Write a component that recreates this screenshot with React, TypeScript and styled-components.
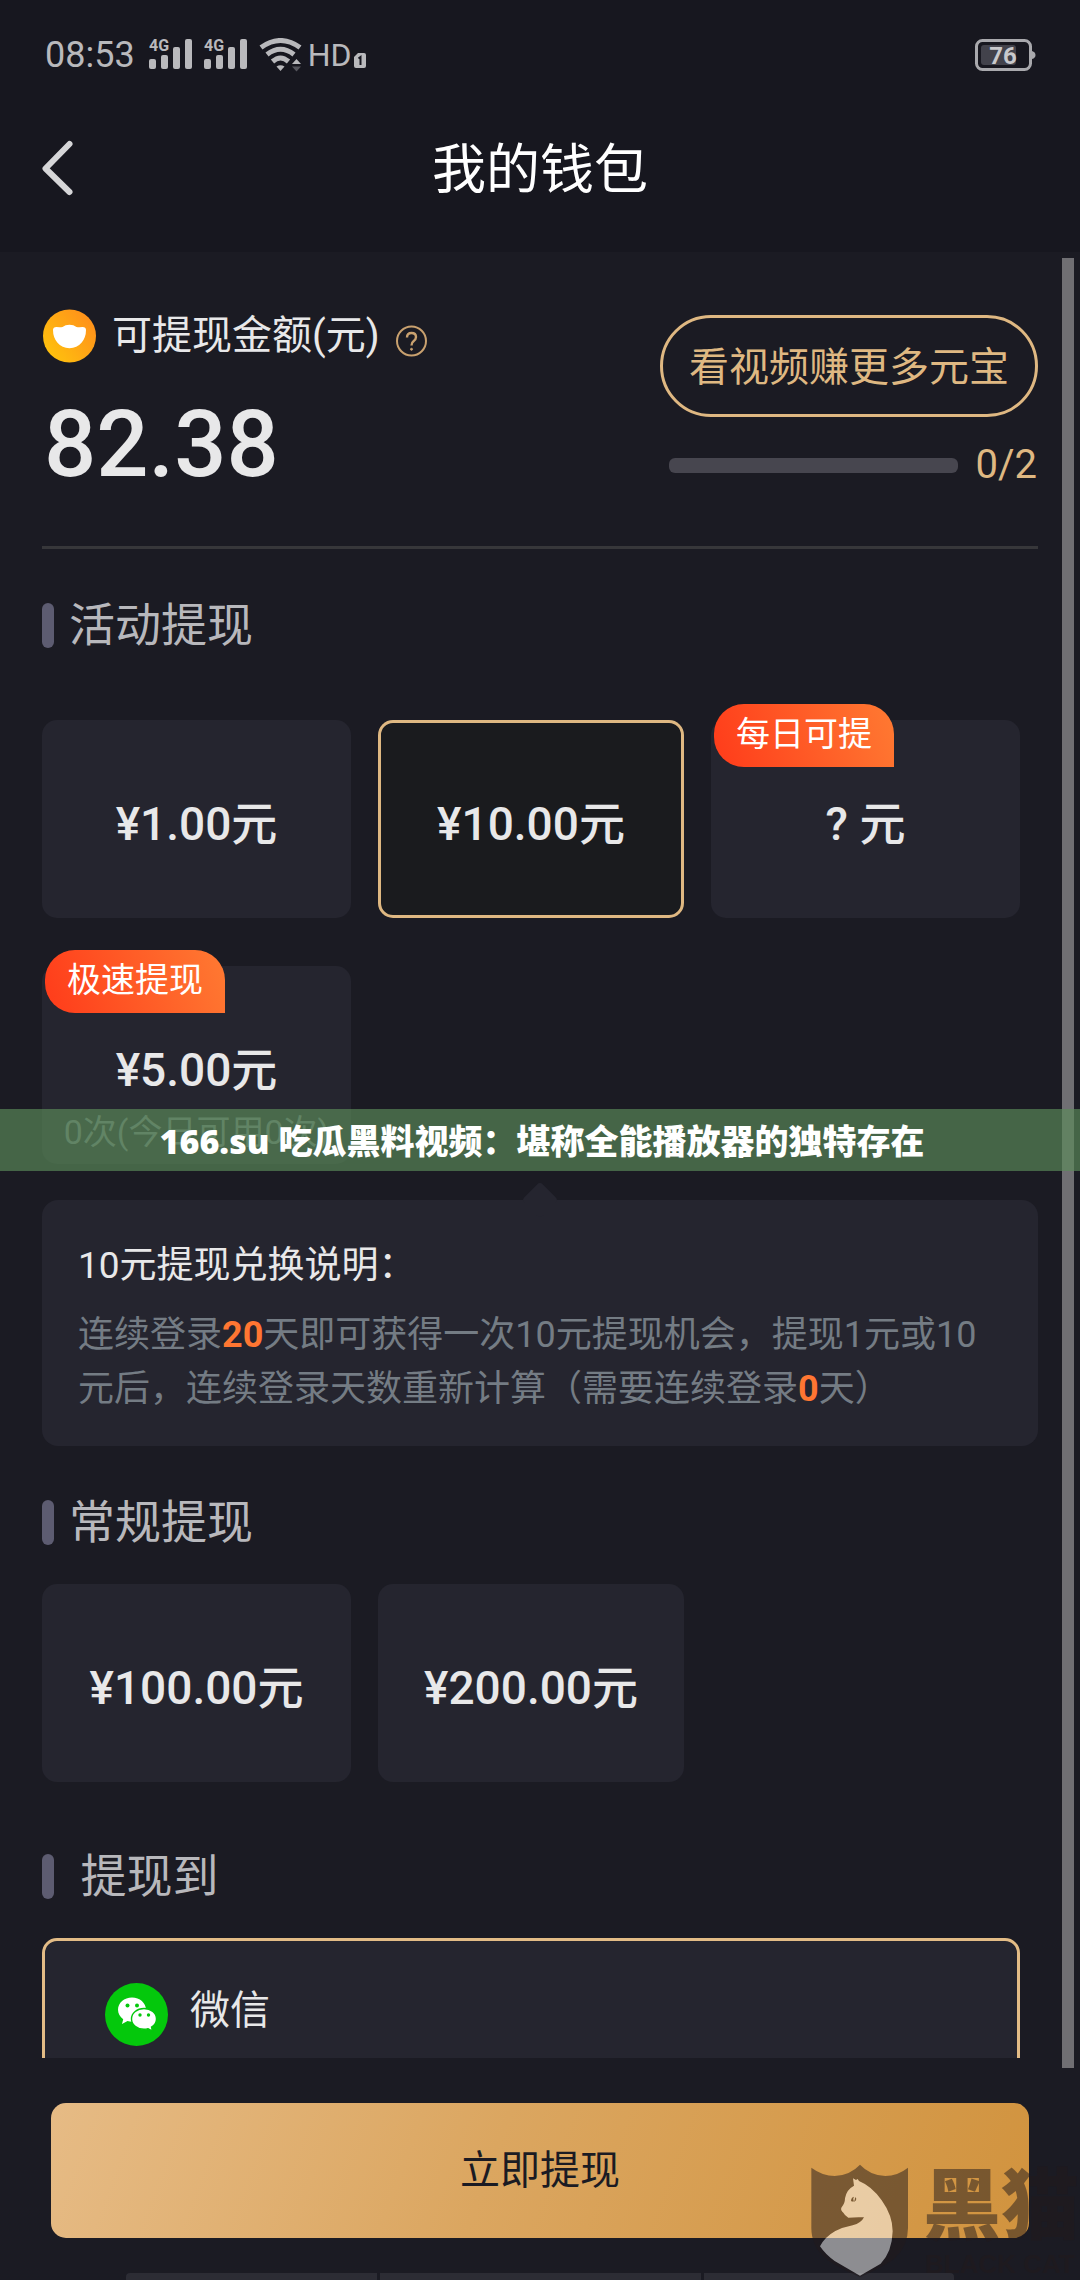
import React, { useState } from "react";
import styled, { createGlobalStyle, css } from "styled-components";

const color = {
  header: "#17171f",
  page: "#1b1b23",
  card: "#25252f",
  gold: "#dfb882",
  text: "#e8e8e9",
  muted: "#b8b8bc",
  hint: "#747c84",
  accent: "#ff7632",
};

const GlobalStyle = createGlobalStyle`
  *, *::before, *::after { box-sizing: border-box; }
  body {
    margin: 0;
    background: ${color.page};
    color: ${color.text};
    font-family: Roboto, "Noto Sans CJK SC", sans-serif;
  }
  button {
    margin: 0;
    padding: 0;
    border: 0;
    background: none;
    color: inherit;
    font: inherit;
    cursor: pointer;
  }
  h1, h2, h3, p { margin: 0; font-weight: 400; }
  svg { display: block; }
`;

const Screen = styled.div`
  position: relative;
  display: flex;
  flex-direction: column;
  height: 100vh;
  overflow: hidden;
`;

/* ---------- status bar and title ---------- */

const Header = styled.header`
  flex: none;
  background: ${color.header};
`;

const StatusBar = styled.div`
  display: flex;
  align-items: center;
  justify-content: space-between;
  height: 110px;
  padding: 0 44px 0 45px;
  color: #b9b9bc;
`;

const StatusGroup = styled.div`
  display: flex;
  align-items: center;
  gap: 12px;
`;

const Clock = styled.time`
  margin-right: 2px;
  font-size: 36px;
  line-height: 44px;
`;

const Network = styled.span`
  display: flex;
  align-items: flex-end;
  gap: 3px;
  margin-left: -6px;
  font-size: 32px;
  line-height: 32px;
`;

const TitleBar = styled.div`
  display: grid;
  grid-template-columns: 60px 1fr 60px;
  align-items: center;
  height: 142px;
  padding: 0 36px 26px;
`;

const Title = styled.h1`
  padding-top: 6px;
  color: #fff;
  font-size: 54px;
  line-height: 72px;
  text-align: center;
`;

/* ---------- scrolling body ---------- */

const Body = styled.main`
  position: relative;
  flex: 1;
  min-height: 0;
`;

const Scroller = styled.div`
  height: 100%;
  padding: 0 42px;
  overflow-y: auto;
  scrollbar-width: none;
`;

const ScrollThumb = styled.div`
  position: absolute;
  top: 6px;
  right: 6px;
  bottom: -10px;
  width: 12px;
  background: #706f73;
`;

const Summary = styled.section`
  display: flex;
  justify-content: space-between;
  align-items: flex-start;
  padding: 57px 0 47px;
  border-bottom: 3px solid #37373a;
`;

const BalanceLabel = styled.div`
  display: flex;
  align-items: center;
  gap: 16px;
  height: 54px;
  font-size: 40px;
  line-height: 54px;
`;

const HelpButton = styled.button`
  align-self: flex-end;
  padding-bottom: 6px;
`;

const Balance = styled.p`
  margin-top: 28px;
  padding-left: 2px;
  font-size: 92px;
  line-height: 108px;
  font-weight: 500;
`;

const Earn = styled.div`
  margin-top: 6px;
  color: ${color.gold};
  font-size: 40px;
`;

const EarnButton = styled.button`
  height: 102px;
  padding: 0 26px 4px;
  border: 3px solid ${color.gold};
  border-radius: 51px;
`;

const EarnProgress = styled.div`
  display: flex;
  align-items: center;
  gap: 18px;
  margin-top: 24px;
  padding: 0 1px 0 9px;
  line-height: 48px;
`;

const Meter = styled.progress`
  flex: 1;
  width: 0;
  height: 15px;
  border: 0;
  border-radius: 6px;
  overflow: hidden;
  appearance: none;
  background: #47464f;
  &::-webkit-progress-bar { background: #47464f; }
  &::-webkit-progress-value { background: ${color.gold}; }
`;

const Section = styled.section`
  padding-top: 54px;
`;

const SectionTitle = styled.h2`
  display: flex;
  align-items: center;
  gap: 15px;
  margin-bottom: 39px;
  color: ${color.muted};
  font-size: 46px;
  line-height: 45px;
  &::before {
    content: "";
    width: 12px;
    height: 45px;
    border-radius: 6px;
    background: #5d5c71;
  }
`;

const Options = styled.div<{ $badged?: boolean }>`
  display: grid;
  grid-template-columns: 309fr 306fr 309fr;
  gap: 48px 27px;
  padding: ${(p) => (p.$badged ? "33px" : "0")} 18px 18px 0;
`;

const Option = styled.button<{ $selected: boolean }>`
  position: relative;
  display: grid;
  grid-template-rows: 1fr auto 1fr;
  justify-items: center;
  align-items: center;
  height: 198px;
  padding-top: 10px;
  border-radius: 15px;
  background: ${color.card};
  white-space: nowrap;
  ${(p) =>
    p.$selected &&
    css`
      background: #1a1b1e;
      box-shadow: inset 0 0 0 3px ${color.gold};
    `}
`;

const Amount = styled.span`
  grid-row: 2;
  font-size: 46px;
  line-height: 60px;
  font-weight: 500;
`;

const Note = styled.span`
  grid-row: 3;
  color: #6f767c;
  font-size: 34px;
  line-height: 48px;
`;

const Badge = styled.span`
  position: absolute;
  top: -16px;
  left: 3px;
  width: 180px;
  height: 63px;
  border-radius: 30px 30px 0 30px;
  background: linear-gradient(70deg, #ff3b1a, #ff7a32);
  color: #fff;
  font-size: 34px;
  line-height: 61px;
  text-align: center;
`;

const Rules = styled.div`
  position: relative;
  margin-top: 18px;
  padding: 39px 36px 30px;
  border-radius: 16px;
  background: ${color.card};
  &::before {
    content: "";
    position: absolute;
    top: -13px;
    left: calc(50% - 13px);
    width: 26px;
    height: 26px;
    border-radius: 4px;
    background: ${color.card};
    transform: rotate(45deg);
  }
`;

const RulesTitle = styled.h3`
  position: relative;
  font-size: 37px;
  line-height: 54px;
`;

const RulesText = styled.p`
  margin-top: 15px;
  color: ${color.hint};
  font-size: 36px;
  line-height: 54px;
  b {
    color: ${color.accent};
    font-weight: 700;
  }
`;

const Method = styled.label`
  display: flex;
  align-items: flex-start;
  gap: 22px;
  height: 153px;
  margin-right: 18px;
  padding: 42px 60px;
  border: 3px solid #e3bc86;
  border-radius: 15px;
  background: ${color.card};
  font-size: 40px;
  line-height: 56px;
  cursor: pointer;
`;

const HiddenRadio = styled.input`
  position: absolute;
  opacity: 0;
  pointer-events: none;
`;

/* ---------- footer ---------- */

const Footer = styled.footer`
  flex: none;
  padding-top: 45px;
`;

const SubmitRow = styled.div`
  display: flex;
  padding: 0 51px;
`;

const Submit = styled.button`
  flex: 1;
  height: 135px;
  padding-bottom: 8px;
  border-radius: 15px;
  background: linear-gradient(110deg, #e6bb85, #dba660 45%, #d1933e);
  color: ${color.page};
  font-size: 40px;
`;

const Dock = styled.div`
  display: grid;
  grid-template-columns: 251fr 320fr 250fr;
  gap: 3px;
  height: 7px;
  margin: 35px 126px 0;
  border-radius: 4px 4px 0 0;
  overflow: hidden;
`;

const DockCell = styled.span`
  background: #2c2c34;
`;

/* ---------- overlays ---------- */

const Banner = styled.div`
  position: absolute;
  top: 50%;
  left: 0;
  right: 0;
  height: 62px;
  padding-left: 4px;
  transform: translateY(-50%);
  background: rgba(91, 139, 89, 0.67);
  color: #fff;
  font-family: "Open Sans", "Noto Sans CJK SC", sans-serif;
  font-size: 34px;
  line-height: 64px;
  font-weight: 900;
  text-align: center;
  white-space: nowrap;
  pointer-events: none;
`;

const Watermark = styled.div`
  position: absolute;
  right: 0;
  bottom: 2px;
  display: flex;
  gap: 13px;
  color: #211a1d;
  opacity: 0.5;
  pointer-events: none;
`;

const WatermarkText = styled.div`
  width: 157px;
  font-family: "Liberation Sans", "Noto Sans CJK SC", sans-serif;
  font-weight: 900;
  white-space: nowrap;
`;

const WatermarkName = styled.div`
  font-size: 78px;
  line-height: 88px;
`;

const WatermarkLatin = styled.div`
  padding-left: 2px;
  font-size: 26px;
  line-height: 26px;
`;

/* ---------- drawings ---------- */

const SignalIcon = () => (
  <svg width="43" height="40" viewBox="0 -4 43 40" fill="currentColor" aria-hidden="true">
    <text x="0" y="12" fontSize="16" fontWeight="700" fontFamily="Roboto, sans-serif">4G</text>
    <rect x="0" y="20" width="7" height="10" rx="2" />
    <rect x="12" y="16" width="7" height="14" rx="2" />
    <rect x="24" y="8" width="7" height="22" rx="2" />
    <rect x="36" y="0" width="7" height="30" rx="2" />
  </svg>
);

const WifiIcon = () => (
  <svg width="43" height="34" viewBox="0 0 43 34" aria-hidden="true">
    <g fill="none" stroke="currentColor" strokeWidth="5">
      <path d="M2 9.500Q21.500 -4.500 41 9.500" />
      <path d="M8 16.500Q21.500 6 35 16.500" />
      <path d="M13.500 23.500Q21.500 16.500 29.500 23.500" />
    </g>
    <path d="M17.500 28.500q4-2.500 8 0l-4 4.500z" fill="currentColor" />
    <path d="M33 26l4.500-5 4.500 5z" fill="currentColor" />
    <path d="M33 28.500h9l-4.500 5z" fill="#55555c" />
  </svg>
);

const SimIcon = () => (
  <svg width="12" height="18" viewBox="0 0 12 18" aria-hidden="true">
    <path d="M4 0h6a2 2 0 0 1 2 2v11a2 2 0 0 1-2 2H2a2 2 0 0 1-2-2V4z" fill="currentColor" />
    <path d="M4.500 5.500L6.500 4V12" fill="none" stroke="#17171f" strokeWidth="2" />
  </svg>
);

const BatteryIcon = () => (
  <svg width="61" height="33" viewBox="0 0 61 33" role="img" aria-label="76">
    <rect x="6" y="6" width="35" height="20" rx="3" fill="#42424b" />
    <rect x="1.500" y="1.500" width="54" height="29" rx="6" fill="none" stroke="#a9a9ad" strokeWidth="3" />
    <path d="M57 12q3.500 1 3.500 4t-3.500 4z" fill="#a9a9ad" />
    <text x="28" y="25" textAnchor="middle" fontSize="24" fontWeight="700" fontFamily="Roboto, sans-serif" fill="#c9c9cc">76</text>
  </svg>
);

const BackIcon = () => (
  <svg width="42" height="56" viewBox="0 0 42 56" fill="none" stroke="#d6d6d8" strokeWidth="6" strokeLinecap="round" strokeLinejoin="round" aria-hidden="true">
    <path d="M33.500 4L9.500 28.500L33.500 52" />
  </svg>
);

const CoinIcon = () => (
  <svg width="54" height="54" viewBox="0 0 54 54" aria-hidden="true">
    <defs>
      <linearGradient id="coin" x1="0" y1="0.900" x2="0.900" y2="0.200">
        <stop offset="0" stopColor="#ffc60c" />
        <stop offset="1" stopColor="#ff921a" />
      </linearGradient>
    </defs>
    <circle cx="27.500" cy="27" r="26.500" fill="url(#coin)" />
    <path d="M11 21q0-2.700 3.500-2.900 4 .3 6-.1 2.800-2.200 7-2.200t7 2.200q2 .4 6 .1 3.500.2 3.500 2.900 0 7.500-4.500 12.800T27.500 39.200q-7.500 0-12-5.400T11 21z" fill="#fff" />
  </svg>
);

const HelpIcon = () => (
  <svg width="32" height="32" viewBox="0 0 32 32" fill="none" stroke="#c9a16f" strokeWidth="2" aria-hidden="true">
    <circle cx="15.500" cy="16" r="14.500" />
    <path d="M11 12.500q0-4.500 4.500-4.500t4.500 4q0 2.500-2.500 4.200-2 1.300-2 4.300" strokeWidth="2.400" />
    <circle cx="15.500" cy="24.300" r="1" fill="#c9a16f" strokeWidth="1" />
  </svg>
);

const WechatIcon = () => (
  <svg width="63" height="63" viewBox="0 0 63 63" aria-hidden="true">
    <circle cx="31.500" cy="31.500" r="31.500" fill="#04c80c" />
    <path d="M27 14.500c-7.800 0-14 5.400-14 12.200 0 3.900 2 7.200 5.200 9.500L17 41l5.500-2.900q2.200.6 4.500.6c7.800 0 14-5.300 14-12s-6.200-12.200-14-12.200z" fill="#fff" />
    <path d="M39 25.500c-6.900 0-12.500 4.700-12.500 10.400S32.100 46.300 39 46.300q2.200 0 4.100-.6L47.500 48l-1-4c3.100-1.900 5-4.800 5-8.100 0-5.700-5.600-10.400-12.500-10.400z" fill="#fff" stroke="#04c80c" strokeWidth="1.400" />
    <g fill="#04c80c">
      <circle cx="22.500" cy="22.500" r="2" />
      <circle cx="32" cy="22.500" r="2" />
      <circle cx="35" cy="32" r="1.700" />
      <circle cx="43.500" cy="32" r="1.700" />
    </g>
  </svg>
);

const CatShield = () => (
  <svg width="100" height="115" viewBox="90 100 300 345" aria-hidden="true">
    <path
      d="M94 114Q128 139 164 139Q210 137 240 105Q270 137 316 139Q352 139 384 114V295Q384 348 345 385Q322 405 240 443Q158 405 135 385Q94 348 94 295Z"
      fill="currentColor"
    />
    <path
      d="M219 146L228 151L233 148L237 154Q276 170 305 212Q338 258 338 305Q336 368 302 402L240 438L164 394Q136 374 120 350Q134 322 166 304Q188 293 218 287Q244 280 252 263Q226 262 205 264Q194 257 190 249Q181 241 184 234Q195 222 195 206Q199 180 222 168Z"
      fill="#fff"
    />
    <path d="M213 213Q214 202 222 201L220 206Q219 212 222 215Q216 217 213 213ZM225 202Q231 206 228 212L222 217Q226 209 225 202Z" fill="currentColor" />
  </svg>
);

/* ---------- page ---------- */

type Choice = { label: string; badge?: string; note?: string };

const activityChoices: Choice[] = [
  { label: "¥1.00元" },
  { label: "¥10.00元" },
  { label: "? 元", badge: "每日可提" },
  { label: "¥5.00元", badge: "极速提现", note: "0次(今日可用0次)" },
];

const regularChoices: Choice[] = [{ label: "¥100.00元" }, { label: "¥200.00元" }];

type ChoiceGridProps = {
  choices: Choice[];
  selected: string;
  onSelect: (label: string) => void;
  badged?: boolean;
};

const ChoiceGrid = ({ choices, selected, onSelect, badged }: ChoiceGridProps) => (
  <Options $badged={badged}>
    {choices.map((c) => (
      <Option
        key={c.label}
        type="button"
        $selected={c.label === selected}
        aria-pressed={c.label === selected}
        onClick={() => onSelect(c.label)}
      >
        {c.badge && <Badge>{c.badge}</Badge>}
        <Amount>{c.label}</Amount>
        {c.note && <Note>{c.note}</Note>}
      </Option>
    ))}
  </Options>
);

export default function App() {
  const [selected, setSelected] = useState("¥10.00元");

  return (
    <Screen lang="zh-CN">
      <GlobalStyle />
      <Header>
        <StatusBar>
          <StatusGroup>
            <Clock>08:53</Clock>
            <SignalIcon />
            <SignalIcon />
            <WifiIcon />
            <Network>
              HD
              <SimIcon />
            </Network>
          </StatusGroup>
          <BatteryIcon />
        </StatusBar>
        <TitleBar>
          <button type="button" aria-label="返回">
            <BackIcon />
          </button>
          <Title>我的钱包</Title>
        </TitleBar>
      </Header>

      <Body>
        <Scroller>
          <Summary>
            <div>
              <BalanceLabel>
                <CoinIcon />
                <span>可提现金额(元)</span>
                <HelpButton type="button" aria-label="说明">
                  <HelpIcon />
                </HelpButton>
              </BalanceLabel>
              <Balance>82.38</Balance>
            </div>
            <Earn>
              <EarnButton type="button">看视频赚更多元宝</EarnButton>
              <EarnProgress>
                <Meter value={0} max={2} aria-label="0/2" />
                <span>0/2</span>
              </EarnProgress>
            </Earn>
          </Summary>

          <Section>
            <SectionTitle>活动提现</SectionTitle>
            <ChoiceGrid choices={activityChoices} selected={selected} onSelect={setSelected} badged />
            <Rules>
              <RulesTitle>10元提现兑换说明：</RulesTitle>
              <RulesText>
                连续登录<b>20</b>天即可获得一次10元提现机会，提现1元或10元后，连续登录天数重新计算（需要连续登录<b>0</b>天）
              </RulesText>
            </Rules>
          </Section>

          <Section>
            <SectionTitle>常规提现</SectionTitle>
            <ChoiceGrid choices={regularChoices} selected={selected} onSelect={setSelected} />
          </Section>

          <Section>
            <SectionTitle>{"\u00a0提现到"}</SectionTitle>
            <Method>
              <HiddenRadio type="radio" name="method" value="wechat" defaultChecked />
              <WechatIcon />
              微信
            </Method>
          </Section>
        </Scroller>
        <ScrollThumb />
      </Body>

      <Footer>
        <SubmitRow>
          <Submit type="button">立即提现</Submit>
        </SubmitRow>
        <Dock>
          <DockCell />
          <DockCell />
          <DockCell />
        </Dock>
      </Footer>

      <Banner>166.su 吃瓜黑料视频：堪称全能播放器的独特存在</Banner>
      <Watermark>
        <CatShield />
        <WatermarkText>
          <WatermarkName>黑猫</WatermarkName>
          <WatermarkLatin>BLACK CAT</WatermarkLatin>
        </WatermarkText>
      </Watermark>
    </Screen>
  );
}
